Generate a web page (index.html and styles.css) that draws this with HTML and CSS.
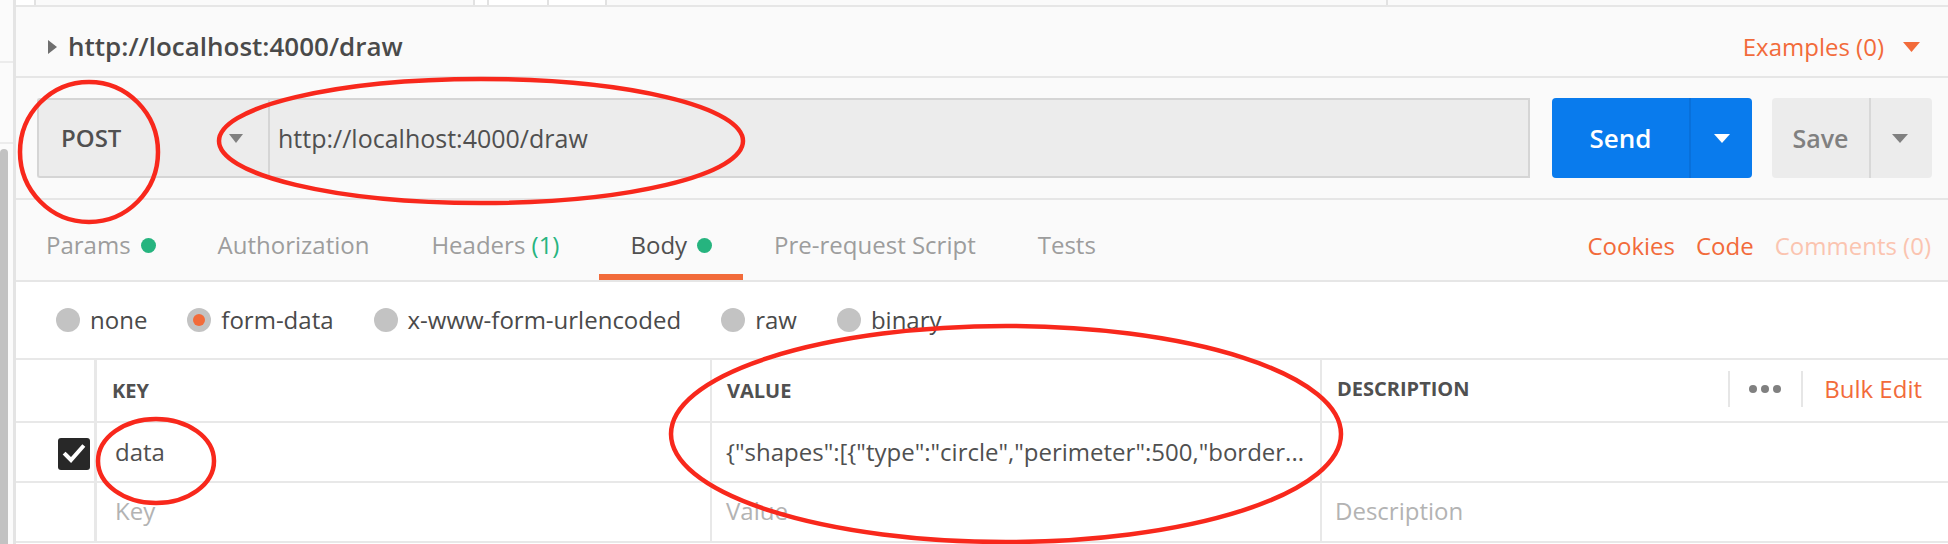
FILE: index.html
```html
<!DOCTYPE html>
<html lang="en">
<head>
<meta charset="utf-8">
<title>Postman request</title>
<link rel="stylesheet" href="styles.css">
</head>
<body>
<div class="app">
  <aside class="sidebar">
    <div class="sb-top"></div>
    <div class="sb-mid"></div>
    <div class="sb-thumb"></div>
  </aside>
  <main class="panel">
    <div class="tabstrip">
      <span class="ts-cell ts-a"></span>
      <span class="ts-cell ts-b"></span>
      <span class="ts-cell ts-c"></span>
      <span class="ts-cell ts-d"></span>
      <span class="ts-cell ts-e"></span>
      <span class="ts-cell ts-f"></span>
      <span class="ts-rest"></span>
    </div>

    <div class="titlebar">
      <div class="title">
        <svg class="caret-right" width="9" height="14" viewBox="0 0 9 14"><polygon points="0,0 9,7 0,14" fill="#6f6f6f"/></svg>
        <span class="title-text">http://localhost:4000/draw</span>
      </div>
      <div class="examples">
        <span>Examples (0)</span>
        <svg class="caret-down" width="17" height="10" viewBox="0 0 17 10"><polygon points="0,0 17,0 8.5,10" fill="#f26b3a"/></svg>
      </div>
    </div>

    <div class="urlrow">
      <div class="method">
        <span class="method-name">POST</span>
        <svg width="14" height="9" viewBox="0 0 14 9"><polygon points="0,0 14,0 7,9" fill="#808080"/></svg>
      </div>
      <div class="url-input">http://localhost:4000/draw</div>
      <div class="btn send">
        <span class="btn-main">Send</span>
        <span class="btn-drop"><svg width="16" height="9" viewBox="0 0 16 9"><polygon points="0,0 16,0 8,9" fill="#ffffff"/></svg></span>
      </div>
      <div class="btn save">
        <span class="btn-main">Save</span>
        <span class="btn-drop"><svg width="16" height="9" viewBox="0 0 16 9"><polygon points="0,0 16,0 8,9" fill="#808080"/></svg></span>
      </div>
    </div>

    <div class="tabs">
      <div class="tab-list">
        <div class="tab">Params<span class="dot"></span></div>
        <div class="tab">Authorization</div>
        <div class="tab headers">Headers <span class="count">(1)</span></div>
        <div class="tab active">Body<span class="dot"></span></div>
        <div class="tab">Pre-request Script</div>
        <div class="tab">Tests</div>
      </div>
      <div class="tab-links">
        <span class="link">Cookies</span>
        <span class="link">Code</span>
        <span class="link faded">Comments (0)</span>
      </div>
    </div>

    <div class="bodytypes">
      <label class="radio"><span class="radio-dot"></span>none</label>
      <label class="radio"><span class="radio-dot on"></span>form-data</label>
      <label class="radio"><span class="radio-dot"></span>x-www-form-urlencoded</label>
      <label class="radio"><span class="radio-dot"></span>raw</label>
      <label class="radio"><span class="radio-dot"></span>binary</label>
    </div>

    <div class="kv">
      <div class="cell head check-col"></div>
      <div class="cell head">KEY</div>
      <div class="cell head">VALUE</div>
      <div class="cell head desc-head">
        <span>DESCRIPTION</span>
        <div class="head-tools">
          <span class="tool-sep"></span>
          <span class="more"><i></i><i></i><i></i></span>
          <span class="tool-sep"></span>
          <span class="bulk">Bulk Edit</span>
        </div>
      </div>

      <div class="cell check-col"><span class="checkbox"><svg width="32" height="32" viewBox="0 0 32 32"><polyline points="7.5,16.5 13,22 24.5,9" fill="none" stroke="#ffffff" stroke-width="4" stroke-linecap="square"/></svg></span></div>
      <div class="cell key">data</div>
      <div class="cell val">{"shapes":[{"type":"circle","perimeter":500,"border...</div>
      <div class="cell desc"></div>

      <div class="cell check-col"></div>
      <div class="cell key ph">Key</div>
      <div class="cell val ph">Value</div>
      <div class="cell desc ph">Description</div>
    </div>
  </main>

  <svg class="annotations" width="1948" height="544" viewBox="0 0 1948 544">
    <ellipse cx="89" cy="152" rx="69" ry="70" fill="none" stroke="#f8281c" stroke-width="4.5"/>
    <ellipse cx="481" cy="141" rx="262" ry="62" fill="none" stroke="#f8281c" stroke-width="4.5"/>
    <ellipse cx="156" cy="461" rx="58" ry="42" fill="none" stroke="#f8281c" stroke-width="4.5"/>
    <ellipse cx="1006" cy="434" rx="335" ry="108" fill="none" stroke="#f8281c" stroke-width="4.5"/>
  </svg>
</div>
</body>
</html>
```

FILE: styles.css
```css
* {
  box-sizing: border-box;
  margin: 0;
  padding: 0;
}

html, body {
  width: 1948px;
  height: 544px;
  overflow: hidden;
}

body {
  font-family: "Open Sans", "Noto Sans", sans-serif;
  font-size: 24px;
  line-height: 32px;
  color: #505050;
  background: #fafafa;
}

.app {
  position: relative;
  display: flex;
  height: 544px;
}

/* left sidebar with scrollbar */
.sidebar {
  flex: none;
  width: 16px;
  display: flex;
  flex-direction: column;
  background: #fbfbfb;
  border-right: 3px solid #e4e4e4;
}

.sb-top {
  height: 63px;
  border-bottom: 2px solid #ececec;
}

.sb-mid {
  height: 81px;
  border-bottom: 2px solid #ececec;
}

.sb-thumb {
  flex: 1;
  width: 8px;
  margin-top: 5px;
  background: #c2c2c2;
  border-radius: 4px 4px 0 0;
}

.panel {
  flex: 1;
  display: flex;
  flex-direction: column;
  min-width: 0;
}

/* top tab strip remnant */
.tabstrip {
  flex: none;
  height: 7px;
  display: flex;
  background: #ffffff;
  border-bottom: 2px solid #e6e6e6;
}

.ts-cell {
  border-right: 2px solid #e2e2e2;
}

.ts-a { width: 20px; }
.ts-b { width: 439px; background: #fafafa; }
.ts-c { width: 14px; }
.ts-d { width: 60px; }
.ts-e { width: 58px; }
.ts-f { width: 781px; background: #fafafa; }
.ts-rest { flex: 1; background: #fafafa; }

/* title bar */
.titlebar {
  flex: none;
  height: 71px;
  display: flex;
  justify-content: space-between;
  padding: 23px 28px 0 32px;
  border-bottom: 2px solid #e6e6e6;
}

.title {
  display: flex;
  align-items: center;
  height: 32px;
}

.caret-right {
  margin-right: 11px;
  margin-top: 1px;
}

.title-text {
  font-size: 26px;
  font-weight: 600;
  color: #4a4a4a;
}

.examples {
  display: flex;
  align-items: center;
  height: 32px;
  margin-top: 1px;
  color: #f26b3a;
}

.caret-down {
  margin-left: 19px;
}

/* url row */
.urlrow {
  flex: none;
  height: 122px;
  display: flex;
  padding: 20px 16px 0 21px;
  border-bottom: 2px solid #e6e6e6;
}

.urlrow > * {
  height: 80px;
}

.method {
  flex: none;
  width: 231px;
  display: flex;
  align-items: center;
  justify-content: space-between;
  padding: 0 25px 0 22px;
  background: #ececec;
  border: 2px solid #d5d5d5;
  border-right: none;
  border-radius: 3px 0 0 3px;
}

.method-name {
  font-weight: 600;
  color: #505050;
}

.url-input {
  flex: 1;
  display: flex;
  align-items: center;
  padding-left: 8px;
  background: #ececec;
  border: 2px solid #d5d5d5;
  font-size: 25px;
  color: #505050;
}

.btn {
  flex: none;
  display: flex;
  border-radius: 4px;
  font-weight: 600;
  font-size: 25px;
}

.btn-main,
.btn-drop {
  display: flex;
  align-items: center;
  justify-content: center;
}

.btn-drop {
  flex: 1;
}

.send {
  width: 200px;
  margin-left: 22px;
  background: #097bed;
  color: #ffffff;
  font-size: 26px;
}

.send .btn-main {
  width: 139px;
  border-right: 2px solid #0870db;
}

.save {
  width: 160px;
  margin-left: 20px;
  background: #ececec;
  color: #808080;
}

.save .btn-main {
  width: 99px;
  border-right: 2px solid #d8d8d8;
}

.save .btn-drop svg {
  margin-right: 4px;
}

/* tabs */
.tabs {
  flex: none;
  height: 82px;
  display: flex;
  justify-content: space-between;
  border-bottom: 2px solid #e6e6e6;
}

.tab-list {
  display: flex;
}

.tab {
  position: relative;
  display: flex;
  align-items: flex-start;
  padding: 29px 31px 0 31px;
  color: #9d9d9d;
  white-space: pre;
}

.tab:first-child {
  padding-left: 30px;
}

.tab.headers {
  padding-right: 40px;
}

.tab .count {
  color: #26b47f;
}

.tab .dot {
  width: 15px;
  height: 15px;
  margin: 9px 0 0 10px;
  border-radius: 50%;
  background: #26b47f;
}

.tab.active {
  color: #505050;
}

.tab.active::after {
  content: "";
  position: absolute;
  left: 0;
  right: 0;
  bottom: 0;
  height: 6px;
  background: #f26b3a;
}

.tab-links {
  display: flex;
  gap: 21px;
  padding: 30px 17px 0 0;
}

.link {
  color: #f26b3a;
}

.link.faded {
  color: #fbc4b0;
}

/* body type radios */
.bodytypes {
  flex: none;
  height: 78px;
  display: flex;
  gap: 40px;
  padding: 22px 0 0 40px;
  background: #ffffff;
  border-bottom: 2px solid #e8e8e8;
}

.radio {
  display: flex;
  align-items: center;
  height: 32px;
  color: #4a4a4a;
}

.radio-dot {
  width: 24px;
  height: 24px;
  margin-right: 10px;
  border-radius: 50%;
  background: #c3c3c3;
  display: flex;
  align-items: center;
  justify-content: center;
}

.radio-dot.on::after {
  content: "";
  width: 12px;
  height: 12px;
  border-radius: 50%;
  background: #f26b3a;
}

/* key/value table */
.kv {
  flex: 1;
  display: grid;
  grid-template-columns: 81px 615px 610px 1fr;
  grid-template-rows: 63px 60px 60px;
  align-content: start;
  background: #ffffff;
}

.cell {
  border-right: 2px solid #e8e8e8;
  border-bottom: 2px solid #e8e8e8;
  padding: 13px 0 0 18px;
  white-space: nowrap;
  overflow: hidden;
  text-overflow: ellipsis;
}

.cell:nth-child(4n) {
  border-right: none;
}

.check-col {
  border-right-width: 3px;
  padding: 0 4px 0 0;
  display: flex;
  align-items: center;
  justify-content: flex-end;
}

.head {
  padding: 18px 0 0 15px;
  font-size: 20px;
  line-height: 26px;
  font-weight: 700;
  color: #505050;
}

.head.check-col {
  padding: 0;
}

.desc-head {
  display: flex;
  justify-content: space-between;
  padding-top: 0;
  align-items: center;
  padding-bottom: 4px;
}

.head-tools {
  display: flex;
  align-items: center;
  height: 100%;
  padding-right: 26px;
}

.tool-sep {
  width: 2px;
  height: 36px;
  background: #e6e6e6;
}

.more {
  display: flex;
  gap: 4px;
  padding: 0 20px 0 19px;
}

.more i {
  width: 8px;
  height: 8px;
  border-radius: 50%;
  background: #808080;
}

.bulk {
  margin-left: 21px;
  font-size: 24px;
  font-weight: 400;
  color: #f26b3a;
}

.checkbox {
  width: 32px;
  height: 32px;
  margin-top: 3px;
  border-radius: 3px;
  background: #282828;
}

.checkbox svg {
  display: block;
}

.key {
  padding-left: 18px;
}

.val {
  padding-left: 14px;
  padding-right: 14px;
}

.desc {
  padding-left: 13px;
}

.ph {
  color: #b3b3b3;
  padding-top: 12px;
}

/* annotation overlay */
.annotations {
  position: absolute;
  left: 0;
  top: 0;
  pointer-events: none;
}
```
